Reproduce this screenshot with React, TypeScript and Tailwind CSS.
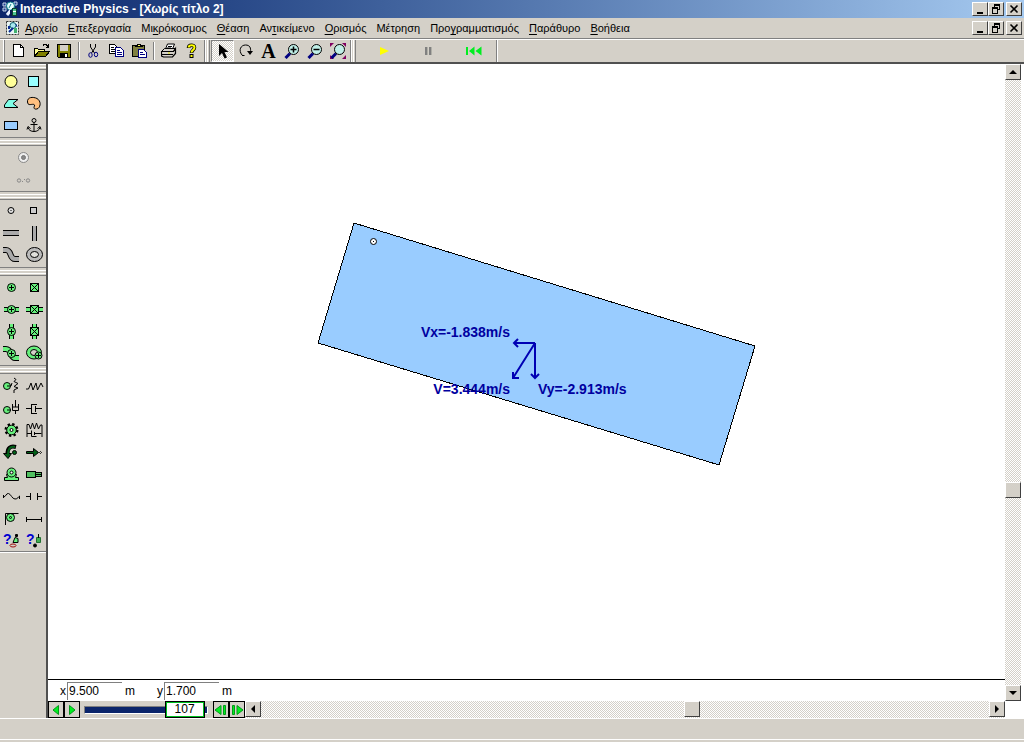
import type { ReactNode } from "react";

const FACE = "bg-[#d4d0c8]";
const RAISED =
  "bg-[#d4d0c8] border border-t-white border-l-white border-b-[#404040] border-r-[#404040]";
const DITHER =
  "bg-[repeating-conic-gradient(#ffffff_0_25%,#d4d0c8_0_50%)] bg-[length:2px_2px]";

const GREEN = "#66f07c";

type IconProps = { children: ReactNode; size?: number; crisp?: boolean };

function Icon({ children, size = 20, crisp = false }: IconProps) {
  return (
    <svg
      width={size}
      height={size}
      viewBox={`0 0 ${size} ${size}`}
      fill="none"
      stroke="#000"
      strokeWidth="1"
      shapeRendering={crisp ? "crispEdges" : "auto"}
      aria-hidden="true"
      className="shrink-0"
    >
      {children}
    </svg>
  );
}

/* ---------- Window chrome ---------- */

function AppIcon() {
  return (
    <Icon size={16}>
      <path d="M1 2h3v3H1zM1 7h3v3H1zM12 1h3v3h-3z" fill="#203c90" stroke="#c8d8e8" />
      <circle cx="8.500" cy="5" r="4" fill="#e8ffff" stroke="#10808c" />
      <path d="M9 3l-2 4" stroke="#10808c" />
      <path d="M9 9l-4 5" stroke="#e8f0ff" strokeWidth="3" />
      <path d="M9 9v6" stroke="#0a1a50" strokeWidth="2" />
      <rect x="10.500" y="7.500" width="4" height="7" fill="#50c890" stroke="#104030" />
      <path d="M11 10.500h3" stroke="#fff" />
    </Icon>
  );
}

function DocIcon() {
  return (
    <Icon size={14}>
      <rect x="0.500" y="0.500" width="12" height="13" fill="#e8f4f4" stroke="#303030" strokeDasharray="2 1" />
      <circle cx="7" cy="4.500" r="3" fill="#a8e8f0" stroke="#10606c" />
      <path d="M7 7l-4 4M3 5v3" stroke="#0a2a90" strokeWidth="2" />
      <path d="M10 3l1 3" stroke="#0a2a90" />
      <rect x="8" y="7" width="3" height="5" fill="#40b070" stroke="none" />
    </Icon>
  );
}

function WindowButtons() {
  const btn = `${RAISED} flex h-[14px] w-4 items-center justify-center`;
  return (
    <div className="flex">
      <button aria-label="Minimize" className={btn}>
        <Icon size={12} crisp>
          <path d="M3 9h6v2h-6z" fill="#000" stroke="none" />
        </Icon>
      </button>
      <button aria-label="Restore" className={btn}>
        <Icon size={12} crisp>
          <path d="M4 1h6v2h-6zM9 3h1v4h-1zM8 6h2v1h-2zM4 3h1v2h-1z" fill="#000" stroke="none" />
          <path d="M2 4h6v2h-6zM2 6h1v5h-1zM7 6h1v5h-1zM3 10h4v1h-4z" fill="#000" stroke="none" />
        </Icon>
      </button>
      <button aria-label="Close" className={`${btn} ml-[2px]`}>
        <Icon size={12}>
          <path d="M2.500 2.500l7 7M9.500 2.500l-7 7" strokeWidth="1.600" />
        </Icon>
      </button>
    </div>
  );
}

const menus = [
  { before: "", key: "Α", after: "ρχείο" },
  { before: "", key: "Ε", after: "πεξεργασία" },
  { before: "Μι", key: "κ", after: "ρόκοσμος" },
  { before: "", key: "Θ", after: "έαση" },
  { before: "Αν", key: "τ", after: "ικείμενο" },
  { before: "", key: "Ο", after: "ρισμός" },
  { before: "Μέτρηση", key: "", after: "" },
  { before: "Προ", key: "γ", after: "ραμματισμός" },
  { before: "", key: "Π", after: "αράθυρο" },
  { before: "", key: "Β", after: "οήθεια" },
];

/* ---------- Toolbar ---------- */

type Tool = { label: string; icon: ReactNode };

const fileTools: Tool[] = [
  {
    label: "New",
    icon: (
      <Icon size={16} crisp>
        <path d="M2.500 1.500h7l3 3v9h-10z" fill="#fff" />
        <path d="M9.500 1.500v3h3" />
      </Icon>
    ),
  },
  {
    label: "Open",
    icon: (
      <Icon size={16} crisp>
        <path d="M0.500 13.500v-8h3l1 1h6v2" fill="#ffff90" />
        <path d="M0.500 13.500l4-5h11l-4 5z" fill="#808000" />
        <path d="M9 2.500l1-1h2l2 2M14.500 1v3h-3" />
      </Icon>
    ),
  },
  {
    label: "Save",
    icon: (
      <Icon size={16} crisp>
        <path d="M0.500 1.500h13v13h-12l-1-1z" fill="#808000" />
        <path d="M3 2h8v6h-8z" fill="#d4d0c8" stroke="none" />
        <path d="M3 10h8v4h-8z" fill="#000" stroke="none" />
        <path d="M8 11h2v3h-2z" fill="#fff" stroke="none" />
      </Icon>
    ),
  },
];

const editTools: Tool[] = [
  {
    label: "Cut",
    icon: (
      <Icon size={16}>
        <path d="M4.500 1v3l4 6M9.500 1v3l-4 6" />
        <ellipse cx="4.500" cy="12" rx="1.700" ry="2.300" stroke="#000080" />
        <ellipse cx="10" cy="11.500" rx="1.700" ry="2.300" stroke="#000080" />
      </Icon>
    ),
  },
  {
    label: "Copy",
    icon: (
      <Icon size={16} crisp>
        <path d="M0.500 1.500h5l2 2v7h-7z" fill="#fff" />
        <path d="M2 4.500h3M2 6.500h4M2 8.500h4" />
        <path d="M6.500 4.500h5l3 3v6h-8z" fill="#fff" stroke="#000080" />
        <path d="M8 7.500h3M8 9.500h5M8 11.500h5" stroke="#000080" />
      </Icon>
    ),
  },
  {
    label: "Paste",
    icon: (
      <Icon size={16} crisp>
        <path d="M0.500 2.500h12v11h-12z" fill="#808040" />
        <path d="M3.500 3.500v-1h2v-1h3v1h2v1z" fill="#ffff60" />
        <path d="M6.500 6.500h5l3 3v5h-8z" fill="#fff" stroke="#000080" />
        <path d="M8 9.500h3M8 11.500h5" stroke="#000080" />
      </Icon>
    ),
  },
];

const printTools: Tool[] = [
  {
    label: "Print",
    icon: (
      <Icon size={16}>
        <path d="M4.500 6l2-5h7l-2 5" fill="#fff" />
        <path d="M7 3.500h4M6 5h4" />
        <path d="M0.500 8.500l3-3h11l-2 3z" fill="#d4d0c8" />
        <path d="M0.500 8.500h12l2-3v5l-3 3.500h-9l-2-1z" fill="#d4d0c8" strokeWidth="1.200" />
        <path d="M1 11.500h11" />
        <path d="M7 10h2" stroke="#e0e000" />
      </Icon>
    ),
  },
  {
    label: "Help",
    icon: (
      <Icon size={16}>
        <path d="M4.500 5C4.500 1.500 10.500 1.500 10.500 4.500C10.500 7 7.500 7 7.500 10" strokeWidth="3.500" />
        <path d="M5.500 11h4v4h-4z" fill="#000" stroke="none" />
        <path d="M4.500 4.500C5 1.500 10.500 1.500 10.500 4.500C10.500 7 7.500 7 7.500 9.500" stroke="#ffff00" strokeWidth="2" />
        <path d="M6.500 12h2v2h-2z" fill="#ffff00" stroke="none" />
      </Icon>
    ),
  },
];

const glass = (
  <>
    <path d="M6 10.500L1.500 15" stroke="#000080" strokeWidth="3" />
    <circle cx="9.500" cy="6.500" r="5" fill="#c0f0e8" />
  </>
);

const viewTools: Tool[] = [
  {
    label: "Rotate",
    icon: (
      <Icon size={16}>
        <path d="M4 12C0 7 3 2 7.500 2C12 2 13 5 12.500 9" />
        <path d="M9 8h6L12 12z" fill="#000" stroke="none" />
        <path d="M4 12.500h2.500" />
      </Icon>
    ),
  },
  {
    label: "Text",
    icon: <span className="font-['Liberation_Serif',serif] text-xl leading-5 font-bold">A</span>,
  },
  {
    label: "Zoom in",
    icon: (
      <Icon size={16}>
        {glass}
        <path d="M6.500 6.500h6M9.500 3.500v6" strokeWidth="1.500" />
      </Icon>
    ),
  },
  {
    label: "Zoom out",
    icon: (
      <Icon size={16}>
        {glass}
        <path d="M6.500 6.500h6" strokeWidth="1.500" />
      </Icon>
    ),
  },
  {
    label: "Zoom to fit",
    icon: (
      <Icon size={16}>
        <path d="M0 0h4L0 4zM16 0v4l-4-4zM16 16h-4l4-4zM0 16v-4l4 4z" fill="#800060" stroke="none" />
        {glass}
      </Icon>
    ),
  },
];

const runTools: Tool[] = [
  {
    label: "Run",
    icon: (
      <Icon size={16}>
        <path d="M4 4l9 4-9 4z" fill="#ffff00" stroke="none" />
      </Icon>
    ),
  },
  {
    label: "Pause",
    icon: (
      <Icon size={16} crisp>
        <path d="M4 4h3v8h-3zM8 4h3v8h-3z" fill="#808080" stroke="none" />
        <path d="M6 4h1v8h-1zM10 4h1v8h-1z" fill="#b0b0a8" stroke="none" />
      </Icon>
    ),
  },
  {
    label: "Reset",
    icon: (
      <Icon size={16}>
        <path d="M0 4h2v8h-2zM8.500 3.500v9L3 8zM15.500 3.500v9L9.500 8z" fill="#00ee20" stroke="none" />
      </Icon>
    ),
  },
];

function ToolGroup({ tools }: { tools: Tool[] }) {
  return (
    <div className="flex">
      {tools.map((t) => (
        <button key={t.label} aria-label={t.label} className="flex h-[22px] w-[23px] items-center justify-center">
          {t.icon}
        </button>
      ))}
    </div>
  );
}

function Divider() {
  return <div className="mx-[2px] h-[18px] w-[2px] border-r border-r-white bg-[#808080]" />;
}

function Grip() {
  return (
    <div className="flex h-[22px] w-2 justify-between px-px">
      <div className="w-[2px] border-l border-l-[#808080] bg-white" />
      <div className="w-[3px] border-r border-l border-r-[#808080] border-l-white" />
    </div>
  );
}

/* ---------- Tool palette ---------- */

const cross = <path d="M10.500 8v5M8 10.500h5" />;
const boxX = (
  <>
    <rect x="6.500" y="6.500" width="8" height="8" fill={GREEN} />
    <path d="M7 7l7 7M14 7l-7 7" />
  </>
);
const pin = (
  <>
    <circle cx="10.500" cy="10.500" r="4" fill={GREEN} />
    {cross}
  </>
);

const palette: Tool[][] = [
  [
    { label: "Circle", icon: <Icon><circle cx="10" cy="10.500" r="6" fill="#ffff99" /></Icon> },
    { label: "Square", icon: <Icon><rect x="4.500" y="5.500" width="10" height="10" fill="#99ffff" /></Icon> },
    { label: "Polygon", icon: <Icon><path d="M3.500 14.500V12l4-5.500h9.500l-5 4 5 4z" fill="#80ffe8" /></Icon> },
    {
      label: "Curved polygon",
      icon: <Icon><path d="M3.500 9C3 4 9 3.500 13 5.500C17 8 17 13 14 15.500C11 17 9 15.500 10.500 13C11 10 7 12 5 11.500Q3.500 11 3.500 9z" fill="#ffc080" /></Icon>,
    },
    { label: "Rectangle", icon: <Icon><rect x="3.500" y="6.500" width="13" height="8" fill="#99ccff" /></Icon> },
    {
      label: "Anchor",
      icon: (
        <Icon>
          <circle cx="10" cy="5.500" r="2" />
          <path d="M10 7.500v9M6.500 9.500h7M4 12.500C4.500 15 7 16.500 10 16.500S15.500 15 16 12.500M3 14.500l1-3 2.500 2M17 14.500l-1-3-2.500 2" />
        </Icon>
      ),
    },
  ],
  [
    {
      label: "Join",
      icon: (
        <Icon>
          <circle cx="10.500" cy="10.500" r="5" fill="#eee" stroke="#888" />
          <circle cx="10.500" cy="10.500" r="2" fill="#888" stroke="#777" />
        </Icon>
      ),
    },
    {
      label: "Split",
      icon: (
        <Icon>
          <circle cx="6" cy="11.500" r="1.700" stroke="#888" />
          <circle cx="15" cy="11.500" r="1.700" stroke="#888" />
          <path d="M9 12.500h1M11 10.500h1" stroke="#888" />
        </Icon>
      ),
    },
  ],
  [
    { label: "Point element", icon: <Icon><circle cx="10" cy="9.500" r="3" fill="#ddd" /><path d="M9.500 9.500h1" /></Icon> },
    { label: "Square point", icon: <Icon><rect x="6.500" y="6.500" width="6" height="6" fill="#ccc" /></Icon> },
    {
      label: "Horizontal slot",
      icon: <Icon crisp><rect x="2" y="8" width="16" height="4" fill="#aaa" stroke="none" /><path d="M2 7.500h16M2 12.500h16" /></Icon>,
    },
    {
      label: "Vertical slot",
      icon: <Icon crisp><rect x="8" y="3" width="4" height="15" fill="#aaa" stroke="none" /><path d="M8.500 3v15M12.500 3v15" /></Icon>,
    },
    {
      label: "Curved slot",
      icon: <Icon><path d="M2 5h3C11 5 8 14 14 14h4" strokeWidth="6" /><path d="M2 5h3C11 5 8 14 14 14h4" stroke="#aaa" strokeWidth="4" /></Icon>,
    },
    {
      label: "Closed slot",
      icon: (
        <Icon>
          <ellipse cx="10.500" cy="9.500" rx="8" ry="7" fill="#bbb" />
          <ellipse cx="10.500" cy="9.500" rx="4" ry="3" fill="#e0e0dc" />
        </Icon>
      ),
    },
  ],
  [
    { label: "Pin joint", icon: <Icon>{pin}</Icon> },
    { label: "Rigid joint", icon: <Icon>{boxX}</Icon> },
    { label: "Horizontal pinned slot", icon: <Icon><rect x="3" y="9" width="15" height="3" fill={GREEN} stroke="none" /><path d="M3 8.500h15M3 12.500h15" />{pin}</Icon> },
    { label: "Horizontal keyed slot", icon: <Icon><rect x="2" y="9" width="17" height="3" fill={GREEN} stroke="none" /><path d="M2 8.500h17M2 12.500h17" />{boxX}</Icon> },
    { label: "Vertical pinned slot", icon: <Icon><rect x="9" y="3" width="3" height="15" fill={GREEN} stroke="none" /><path d="M8.500 3v15M12.500 3v15" />{pin}</Icon> },
    { label: "Vertical keyed slot", icon: <Icon><rect x="9" y="3" width="3" height="15" fill={GREEN} stroke="none" /><path d="M8.500 3v15M12.500 3v15" />{boxX}</Icon> },
    {
      label: "Curved slot joint",
      icon: (
        <Icon>
          <path d="M2 6h3C11 6 9 15 14 15h4" strokeWidth="6" />
          <path d="M2 6h3C11 6 9 15 14 15h4" stroke={GREEN} strokeWidth="4" />
          {pin}
        </Icon>
      ),
    },
    {
      label: "Closed slot joint",
      icon: (
        <Icon>
          <ellipse cx="10" cy="9.500" rx="7.500" ry="6.500" fill={GREEN} />
          <ellipse cx="10" cy="9.500" rx="3.500" ry="3" fill="#d4d0c8" />
          <circle cx="14.500" cy="12.500" r="3.500" fill={GREEN} />
          <path d="M14.500 10v5M12 12.500h5" />
        </Icon>
      ),
    },
  ],
  [
    {
      label: "Torsion spring",
      icon: (
        <Icon>
          <circle cx="6" cy="11" r="3.500" fill={GREEN} />
          <path d="M6 11h4l1-3M13 3l2 1.500-2 2 4 2-4 3 4 1.500-4 2v3" />
        </Icon>
      ),
    },
    { label: "Spring", icon: <Icon><path d="M2 14h2.500L7 8l2 7 3-7 1.500 7L17 8l2 4" /></Icon> },
    {
      label: "Rotational damper",
      icon: (
        <Icon>
          <circle cx="6" cy="13" r="3.500" fill={GREEN} />
          <path d="M6 13h4M11.500 7v6.500h6v-6.500M14.500 3v7M12 10h5M14.500 13v4" />
        </Icon>
      ),
    },
    { label: "Damper", icon: <Icon crisp><path d="M2 11.500h5M7.500 7v10M7 7.500h6M7 16.500h6M11.500 9v6M12 11.500h6" /></Icon> },
    {
      label: "Gear",
      icon: (
        <Icon>
          <circle cx="10.500" cy="11" r="5.500" strokeWidth="3" strokeDasharray="2.200 2.120" />
          <circle cx="10.500" cy="11" r="4.800" fill={GREEN} />
          <circle cx="10.500" cy="11" r="1.500" fill="#fff" />
        </Icon>
      ),
    },
    {
      label: "Spring damper",
      icon: <Icon><path d="M3 18V5.500h2L6.500 10l2-6 2 6 2-6 2 6 2-4h1.500v12M3 14.500h4M7.500 11.500v6h5M10.500 13v3M10.500 14.500h7" /></Icon>,
    },
    {
      label: "Torque",
      icon: (
        <Icon>
          <path d="M15 6C9 4.500 6.500 7 6.500 13" strokeWidth="4" />
          <path d="M2.500 12.500h8L7 17.500z" fill="#006018" />
          <path d="M14 6C9 5 7 8 7 13" stroke="#006018" strokeWidth="2" />
          <circle cx="13.500" cy="11.500" r="2" fill="#006018" />
        </Icon>
      ),
    },
    {
      label: "Force",
      icon: (
        <Icon>
          <path d="M2.500 10.500h7v-3l5 4-5 4v-3h-7z" fill="#006018" />
          <path d="M15.500 11.500l1-1 1 1-1 1z" />
        </Icon>
      ),
    },
    {
      label: "Motor",
      icon: (
        <Icon>
          <path d="M3.500 17.500v-3h3l-1-3h10l-1 3h3v3z" fill={GREEN} />
          <circle cx="10.500" cy="9.500" r="4.500" fill={GREEN} />
          <circle cx="10.500" cy="9.500" r="1.500" fill="#fff" />
        </Icon>
      ),
    },
    {
      label: "Actuator",
      icon: <Icon crisp><path d="M2.500 8.500h9v6h-9zM11.500 9.500h6v4h-6z" fill="#50c060" /><path d="M12 11.500h5" /></Icon>,
    },
    { label: "Rope", icon: <Icon><path d="M2.500 13v-3M2.500 12C5 12 5 8 7.500 8.500S11 14 14 14s3-2 4.500-3v3" /></Icon> },
    { label: "Separator", icon: <Icon crisp><path d="M2 11.500h4M6.500 8v7M13.500 8v7M14 11.500h4" /></Icon> },
    {
      label: "Pulley",
      icon: (
        <Icon>
          <circle cx="9.500" cy="10.500" r="4" fill={GREEN} />
          <circle cx="9.500" cy="10.500" r="1" />
          <path d="M4.500 18V6.500h13" />
        </Icon>
      ),
    },
    { label: "Rod", icon: <Icon crisp><path d="M2.500 10v5M2 12.500h16M17.500 10v5" /></Icon> },
    {
      label: "Constraint motor",
      icon: (
        <Icon>
          <text x="2" y="15" className="font-['Liberation_Sans',sans-serif] text-sm font-bold" fill="#0000d0" stroke="none">?</text>
          <path d="M12 13.500l2-5 3 1v4z" fill={GREEN} />
          <path d="M14 6.500h3M15.500 5v3" strokeWidth="2" />
          <ellipse cx="12" cy="16.500" rx="3" ry="1.500" fill="#d4d0c8" stroke="#a01010" />
        </Icon>
      ),
    },
    {
      label: "Constraint force",
      icon: (
        <Icon>
          <text x="2" y="15" className="font-['Liberation_Sans',sans-serif] text-sm font-bold" fill="#0000d0" stroke="none">?</text>
          <path d="M12.500 13.500v-5h4v5z" fill="#40b050" stroke="#207030" />
          <path d="M14.500 5v4" />
          <circle cx="11" cy="16.500" r="1.500" fill="#000" />
        </Icon>
      ),
    },
  ],
];

function PaletteGroup({ tools, single }: { tools: Tool[]; single: boolean }) {
  return (
    <div className="flex flex-col">
      <div className="flex h-[6px] flex-col justify-between border-b border-b-[#808080] pb-px">
        <div className="h-px bg-white" />
        <div className="h-px bg-white" />
      </div>
      <div className={single ? "grid grid-cols-1" : "grid grid-cols-[22px_23px]"}>
        {tools.map((t) => (
          <button key={t.label} aria-label={t.label} className="flex h-[22px] items-center justify-center">
            {t.icon}
          </button>
        ))}
      </div>
      <div className="mt-px mb-[2px] h-px bg-[#808080]" />
    </div>
  );
}

/* ---------- Workspace ---------- */

function Simulation() {
  return (
    <svg
      className="block h-full w-full font-['Liberation_Sans',sans-serif] text-sm font-bold"
      role="img"
      aria-label="Falling rectangle with velocity vectors"
    >
      <polygon
        points="306,159 707,282 671,401 270,279"
        fill="#99ccff"
        stroke="#000"
        shapeRendering="crispEdges"
      />
      <circle cx="325.500" cy="177.500" r="3" fill="#fff" stroke="#000" />
      <rect x="325" y="177" width="1" height="1" />
      <g stroke="#0000b4" strokeWidth="2" fill="none">
        <path d="M487 279H466M470 275l-4 4 4 4" />
        <path d="M487 279v35M483 310l4 4 4-4" />
        <path d="M487 279L465 314M465 308v6h6" />
      </g>
      <g fill="#0000a0">
        <text x="462" y="273" textAnchor="end">Vx=-1.838m/s</text>
        <text x="462" y="330" textAnchor="end">V=3.444m/s</text>
        <text x="490" y="330">Vy=-2.913m/s</text>
      </g>
    </svg>
  );
}

function ScrollButton({ label, d }: { label: string; d: string }) {
  return (
    <button aria-label={label} className={`${RAISED} flex size-4 shrink-0 items-center justify-center`}>
      <Icon size={12}>
        <path d={d} fill="#000" stroke="none" />
      </Icon>
    </button>
  );
}

function FrameButton({ label, d }: { label: string; d: string }) {
  return (
    <button
      aria-label={label}
      className="flex h-[17px] w-4 shrink-0 items-center justify-center border border-black bg-[#d4d0c8]"
    >
      <Icon size={14}>
        <path d={d} fill="#00ee20" stroke="#009818" />
      </Icon>
    </button>
  );
}

function Coordinate({ name, value }: { name: string; value: string }) {
  return (
    <div className="flex items-center">
      <label htmlFor={name} className="w-[7px]">{name}</label>
      <input
        id={name}
        defaultValue={value}
        className="h-[18px] w-[55px] border-t border-l border-[#808080] bg-white pl-px outline-none"
      />
      <span className="ml-[3px] w-8">m</span>
    </div>
  );
}

function FrameSlider({ frame, last }: { frame: number; last: number }) {
  return (
    <div className="relative flex h-[17px] w-[133px] shrink-0 items-center bg-[#d4d0c8] pr-[5px] pl-1">
      <input
        type="range"
        aria-label="Frame"
        min={0}
        max={last}
        defaultValue={frame}
        className="h-2 w-full appearance-none border border-t-[#808080] border-r-white border-b-white border-l-[#808080] bg-[#0a246a] [&::-webkit-slider-thumb]:appearance-none"
      />
      <output
        className="absolute top-0 h-[17px] w-10 -translate-x-1/2 border border-black bg-white text-center text-xs leading-[15px] ring-1 ring-[#00c020] ring-inset"
        style={{ left: `${(frame / last) * 100}%` }}
      >
        {frame}
      </output>
    </div>
  );
}

export default function App() {
  return (
    <div className={`${FACE} flex h-screen flex-col overflow-hidden font-['Liberation_Sans',sans-serif] text-[11px] text-black`}>
      {/* Title bar */}
      <header className="flex h-[18px] shrink-0 items-center justify-between bg-linear-to-r from-[#0a246a] to-[#a6caf0] px-[2px]">
        <h1 className="flex items-center gap-[2px] text-xs leading-4 font-bold text-white">
          <AppIcon />
          Interactive Physics - [Χωρίς τίτλο 2]
        </h1>
        <WindowButtons />
      </header>

      {/* Menu bar */}
      <nav className="flex h-[21px] shrink-0 items-center border-b border-b-[#808080] pr-[2px] pl-[6px]">
        <DocIcon />
        <div className="ml-[5px] flex flex-1 gap-[10px]">
          {menus.map((m) => (
            <button key={m.before + m.key + m.after} className="leading-4 whitespace-nowrap">
              {m.before}
              <span className="underline underline-offset-2">{m.key}</span>
              {m.after}
            </button>
          ))}
        </div>
        <WindowButtons />
      </nav>

      {/* Toolbar */}
      <div className="flex h-[25px] shrink-0 items-center border-t border-b-2 border-t-white border-b-[#505050] pl-[3px]">
        <div className="mr-[2px] h-[22px] w-[2px] border-r border-r-[#808080] bg-white" />
        <ToolGroup tools={fileTools} />
        <Divider />
        <ToolGroup tools={editTools} />
        <Divider />
        <ToolGroup tools={printTools} />
        <Grip />
        <button
          aria-label="Select"
          aria-pressed="true"
          className={`${DITHER} flex h-[22px] w-[23px] items-center justify-center border border-t-[#808080] border-r-white border-b-white border-l-[#808080]`}
        >
          <Icon size={16}>
            <path d="M4 1v12l3-3 2.500 5.500 2.500-1L9.500 9H13.500z" fill="#000" stroke="none" />
          </Icon>
        </button>
        <ToolGroup tools={viewTools} />
        <Grip />
        <div className="flex pl-1">
          {runTools.map((t) => (
            <button key={t.label} aria-label={t.label} className="flex h-[22px] w-[45px] items-center justify-center">
              {t.icon}
            </button>
          ))}
        </div>
        <div className="h-[22px] w-[2px] border-r border-r-white bg-[#808080]" />
      </div>

      <div className="flex min-h-0 flex-1">
        {/* Tool palette */}
        <aside className="w-12 shrink-0 border-r-2 border-r-[#505050]">
          {palette.map((tools, i) => (
            <PaletteGroup key={i} tools={tools} single={i === 1} />
          ))}
          <div className="-mt-[2px] h-px bg-white" />
        </aside>

        <main className="flex min-w-0 flex-1 flex-col bg-white pr-[3px]">
          <div className="flex min-h-0 flex-1">
            <div className="flex min-w-0 flex-1 flex-col">
              <div className="min-h-0 flex-1">
                <Simulation />
              </div>
              <div className="flex h-[22px] shrink-0 items-center border-t border-t-black pl-3 text-xs">
                <Coordinate name="x" value="9.500" />
                <Coordinate name="y" value="1.700" />
              </div>
            </div>
            <div role="scrollbar" aria-orientation="vertical" aria-controls="root" aria-valuenow={69} className={`${DITHER} flex w-4 flex-col`}>
              <ScrollButton label="Scroll up" d="M6 4l4 4H2z" />
              <div className="flex-[402]" />
              <div className={`${RAISED} h-4`} />
              <div className="flex-[187]" />
              <ScrollButton label="Scroll down" d="M2 4h8L6 8z" />
            </div>
          </div>

          {/* Playback controls and horizontal scroll */}
          <div className="flex h-[17px] shrink-0 pr-4">
            <FrameButton label="Step back" d="M9.500 2.500v9L4 7z" />
            <FrameButton label="Step forward" d="M4.500 2.500v9l5.500-4.500z" />
            <FrameSlider frame={107} last={136} />
            <FrameButton label="Previous frame" d="M7 2.500v9L1 7zM9.500 2.500h2v9h-2z" />
            <FrameButton label="Next frame" d="M7 2.500v9l6-4.500zM2.500 2.500h2v9h-2z" />
            <div role="scrollbar" aria-orientation="horizontal" aria-controls="root" aria-valuenow={59} className={`${DITHER} flex flex-1`}>
              <ScrollButton label="Scroll left" d="M8 2v8L4 6z" />
              <div className="flex-[422]" />
              <div className={`${RAISED} size-4`} />
              <div className="flex-[289]" />
              <ScrollButton label="Scroll right" d="M4 2v8l4-4z" />
            </div>
          </div>
        </main>
      </div>

      {/* Status bar */}
      <footer className="h-6 shrink-0 border-t border-t-white pt-5">
        <div className="h-px bg-white" />
      </footer>
    </div>
  );
}
